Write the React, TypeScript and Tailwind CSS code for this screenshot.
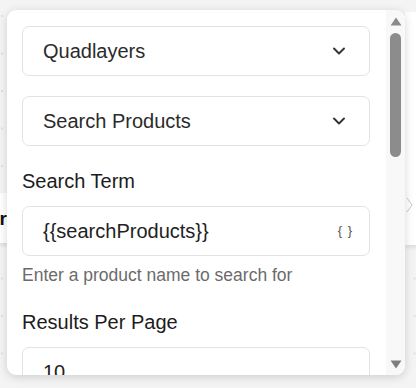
import React from "react";
import { ChevronDown } from "lucide-react";

const font = { fontFamily: '"Liberation Sans", Arial, sans-serif' };

function SelectBox({ label }: { label: string }) {
  return (
    <div className="h-[50px] rounded-[7px] border border-[#e2e2e2] bg-white flex items-center justify-between px-[20px]">
      <span className="text-[20px] text-[#2b2b2b] leading-[24px]">{label}</span>
      <ChevronDown size={20} strokeWidth={2.3} className="text-[#333]" />
    </div>
  );
}

export default function App() {
  return (
    <div
      className="relative w-[416px] h-[388px] overflow-hidden bg-[#f4f4f4] bg-[radial-gradient(circle,#e0e0e0_1.2px,transparent_1.3px)] bg-[size:37.5px_37.5px] bg-[position:-16.75px_-2.75px]"
      style={font}
    >
      {/* background node card (behind popup) */}
      <div className="absolute left-[405px] top-[12px] w-[20px] h-[233px] bg-white shadow-[0_3px_3px_rgba(0,0,0,0.08)]">
        <svg width="8" height="16" viewBox="0 0 8 16" className="absolute left-[1px] top-[185px]">
          <path d="M1 1 L6 8 L1 15" fill="none" stroke="#c8c8c8" strokeWidth="1" />
        </svg>
      </div>
      <div className="absolute left-0 top-[193px] w-[10px] h-[50px] bg-white shadow-[0_3px_3px_rgba(0,0,0,0.08)] flex items-center justify-end overflow-hidden">
        <span className="text-[19px] font-bold text-[#111] leading-none mr-[3px]">r</span>
      </div>

      {/* popup */}
      <div className="absolute left-[7px] top-[10px] w-[398px] h-[365px] bg-white rounded-[9px] shadow-[0_2px_10px_rgba(0,0,0,0.16)] overflow-hidden flex">
        <div className="flex-1 pl-[15px] pr-[16px] pt-[16px] overflow-hidden">
          <div className="flex flex-col gap-[20px]">
            <SelectBox label="Quadlayers" />
            <SelectBox label="Search Products" />
          </div>

          <div className="mt-[23px] text-[20px] leading-[24px] text-[#1c1c1c]">Search Term</div>
          <div className="mt-[13px] h-[50px] rounded-[7px] border border-[#e2e2e2] flex items-center justify-between pl-[20px] pr-[16px]">
            <span className="text-[20px] leading-[24px] text-[#222]">{"{{searchProducts}}"}</span>
            <span className="text-[13px] text-[#555] tracking-[1px]">{"{ }"}</span>
          </div>
          <div className="mt-[7px] text-[17.5px] leading-[24px] text-[#6b6b6b]">
            Enter a product name to search for
          </div>

          <div className="mt-[23px] text-[20px] leading-[24px] text-[#1c1c1c]">Results Per Page</div>
          <div className="mt-[13px] h-[50px] rounded-[7px] border border-[#e2e2e2] flex items-center pl-[20px] pr-[16px]">
            <span className="text-[20px] leading-[24px] text-[#222]">10</span>
          </div>
        </div>

        {/* scrollbar */}
        <div className="w-[19px] bg-[#f8f8f8] flex flex-col items-center pt-[7px] pb-[6px]">
          <svg width="12" height="9" viewBox="0 0 12 9">
            <path d="M6 0.5 L11.5 8.5 L0.5 8.5 Z" fill="#8a8a8a" />
          </svg>
          <div className="mt-[7px] w-[11px] h-[124px] rounded-full bg-[#8c8c8c]" />
          <div className="flex-1" />
          <svg width="12" height="9" viewBox="0 0 12 9">
            <path d="M0.5 0.5 L11.5 0.5 L6 8.5 Z" fill="#7e7e7e" />
          </svg>
        </div>
      </div>
    </div>
  );
}
